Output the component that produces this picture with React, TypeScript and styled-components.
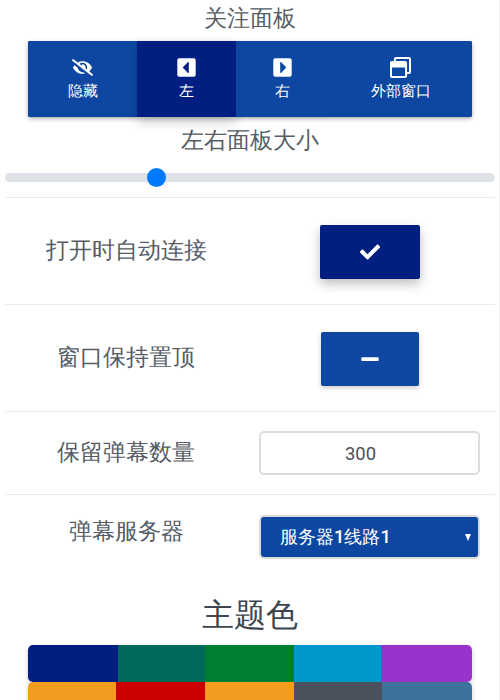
import React from "react";
import styled, { createGlobalStyle } from "styled-components";
import { FaCaretSquareLeft, FaCaretSquareRight, FaCheck, FaEyeSlash, FaMinus, FaRegWindowRestore } from "react-icons/fa";

const GlobalStyle = createGlobalStyle`
  html, body {
    margin: 0;
    padding: 0;
    height: 700px;
    overflow: hidden;
    background: #fff;
    font-family: Roboto, serif;
    color: #555c66;
  }
`;

const Page = styled.div`
  box-sizing: border-box;
  width: 500px;
  height: 700px;
  padding: 0 4px 0 5px;
  border-right: 1px solid #ececec;
`;

const Heading = styled.div`
  text-align: center;
  font-size: 23px;
  font-weight: 300;
  line-height: 38px;
  height: 36px;
`;

const ButtonGroup = styled.div`
  display: flex;
  margin: 5px 23px 0;
  height: 76px;
  border-radius: 2px;
  background: #0d47a1;
  box-shadow: 0 2px 5px rgba(0, 0, 0, 0.25);
`;

const GroupButton = styled.div<{ $width: number; $active?: boolean }>`
  width: ${(p) => p.$width}px;
  box-sizing: border-box;
  padding-bottom: 1px;
  display: flex;
  flex-direction: column;
  align-items: center;
  justify-content: center;
  gap: 4px;
  color: #fff;
  font-size: 14.5px;
  background: ${(p) => (p.$active ? "#001f80" : "#0d47a1")};
  box-shadow: ${(p) => (p.$active ? "0 5px 11px rgba(0, 0, 0, 0.18)" : "0 1px 2px rgba(0, 0, 0, 0.12)")};
  &:first-child {
    border-radius: 2px 0 0 2px;
  }
  &:last-child {
    border-radius: 0 2px 2px 0;
  }
  svg {
    font-size: 21px;
    display: block;
  }
`;

const SizeTitle = styled(Heading)`
  margin-top: 5px;
`;

const Track = styled.div`
  position: relative;
  height: 9px;
  margin: 15px 0 15px;
  border-radius: 5px;
  background: #dee2e6;
`;

const Thumb = styled.div`
  position: absolute;
  left: 142px;
  top: -5px;
  width: 19px;
  height: 19px;
  border-radius: 50%;
  background: #007bff;
`;

const Row = styled.div<{ $height: number }>`
  box-sizing: border-box;
  display: grid;
  grid-template-columns: 242px 1fr;
  align-items: center;
  height: ${(p) => p.$height}px;
  border-top: 1px solid #e9ecef;
`;

const Label = styled.div<{ $raise?: number }>`
  font-size: 23px;
  font-weight: 300;
  text-align: center;
  padding-bottom: ${(p) => p.$raise ?? 1}px;
`;

const ToggleCell = styled.div`
  display: flex;
  justify-content: center;
  padding-right: 2px;
  padding-top: 2px;
`;

const Toggle = styled.div<{ $on?: boolean }>`
  display: flex;
  align-items: center;
  justify-content: center;
  width: ${(p) => (p.$on ? 100 : 98)}px;
  height: 54px;
  border-radius: 2px;
  color: #fff;
  font-size: 20px;
  background: ${(p) => (p.$on ? "#001f80" : "#0d47a1")};
  box-shadow: ${(p) =>
    p.$on ? "0 5px 11px rgba(0, 0, 0, 0.25)" : "0 2px 5px rgba(0, 0, 0, 0.2)"};
`;

const NumberInput = styled.div`
  box-sizing: border-box;
  width: 221px;
  height: 44px;
  margin-left: 12px;
  display: flex;
  align-items: center;
  justify-content: center;
  border: 2px solid #dcdcdc;
  border-radius: 5px;
  padding-right: 18px;
  font-size: 18.4px;
  color: #495057;
`;

const ServerSelect = styled.div`
  position: relative;
  box-sizing: border-box;
  width: 221px;
  height: 44px;
  margin-left: 12px;
  display: flex;
  align-items: center;
  padding-left: 19px;
  border: 2px solid #dcdcdc;
  border-radius: 5px;
  background: #0d47a1;
  color: #fff;
  font-size: 18.4px;
  font-weight: 500;
`;

const Caret = styled.span`
  position: absolute;
  right: 7px;
  top: 17px;
  border-left: 3.5px solid transparent;
  border-right: 3.5px solid transparent;
  border-top: 7px solid #fff;
`;

const ThemeTitle = styled.div`
  text-align: center;
  font-size: 32px;
  font-weight: 300;
  line-height: 44px;
  margin-top: 15px;
  color: #3c4650;
`;

const Swatches = styled.div`
  margin: 8px 23px 0;
`;

const SwatchRow = styled.div<{ $columns: string }>`
  display: grid;
  grid-template-columns: ${(p) => p.$columns};
  height: 37px;
  overflow: hidden;
  border-radius: 5px;
  box-shadow: 0 2px 5px rgba(0, 0, 0, 0.2);
`;

const Swatch = styled.div<{ $color: string }>`
  background: ${(p) => p.$color};
`;

const topSwatches = ["#001f80", "#00695c", "#007e33", "#0099cc", "#9933cc"];
const bottomSwatches = ["#f39c1f", "#cc0000", "#f39c1f", "#4b515d", "#3f729b"];

export default function App() {
  return (
    <Page>
      <GlobalStyle />
      <Heading>关注面板</Heading>
      <ButtonGroup>
        <GroupButton $width={109}>
          <FaEyeSlash />
          隐藏
        </GroupButton>
        <GroupButton $width={99} $active>
          <FaCaretSquareLeft />
          左
        </GroupButton>
        <GroupButton $width={93}>
          <FaCaretSquareRight />
          右
        </GroupButton>
        <GroupButton $width={143}>
          <FaRegWindowRestore />
          外部窗口
        </GroupButton>
      </ButtonGroup>
      <SizeTitle>左右面板大小</SizeTitle>
      <Track>
        <Thumb />
      </Track>
      <Row $height={107}>
        <Label>打开时自动连接</Label>
        <ToggleCell>
          <Toggle $on>
            <FaCheck />
          </Toggle>
        </ToggleCell>
      </Row>
      <Row $height={107}>
        <Label>窗口保持置顶</Label>
        <ToggleCell>
          <Toggle>
            <FaMinus />
          </Toggle>
        </ToggleCell>
      </Row>
      <Row $height={83}>
        <Label>保留弹幕数量</Label>
        <NumberInput>300</NumberInput>
      </Row>
      <Row $height={84}>
        <Label $raise={10}>弹幕服务器</Label>
        <ServerSelect>
          服务器1线路1
          <Caret />
        </ServerSelect>
      </Row>
      <ThemeTitle>主题色</ThemeTitle>
      <Swatches>
        <SwatchRow $columns="90px 87px 89px 87px 91px">
          {topSwatches.map((c, i) => (
            <Swatch key={i} $color={c} />
          ))}
        </SwatchRow>
        <SwatchRow $columns="88px 89px 89px 88px 90px">
          {bottomSwatches.map((c, i) => (
            <Swatch key={i} $color={c} />
          ))}
        </SwatchRow>
      </Swatches>
    </Page>
  );
}
